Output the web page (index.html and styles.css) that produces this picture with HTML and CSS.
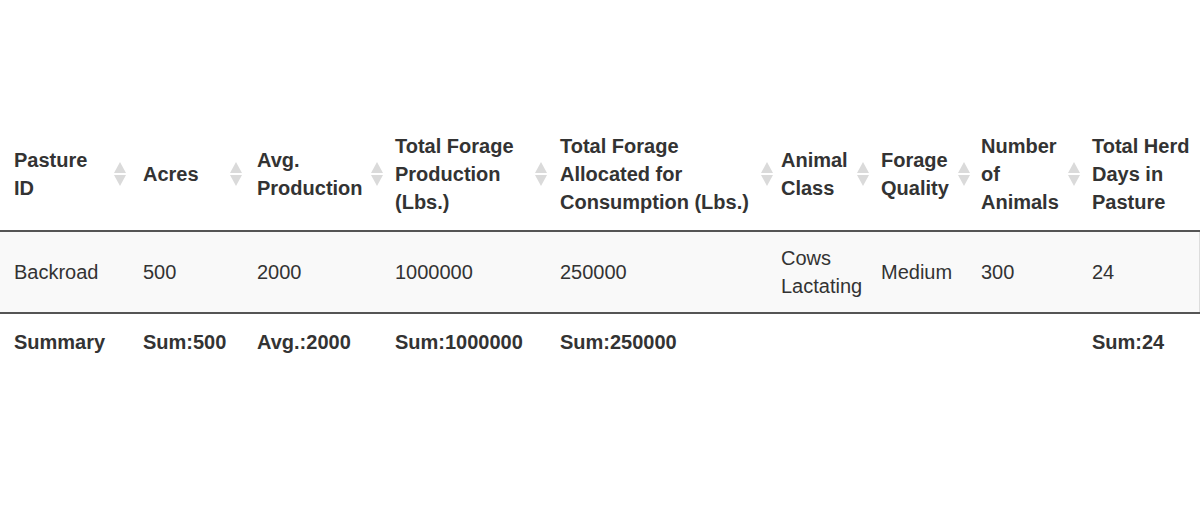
FILE: index.html
```html
<!DOCTYPE html>
<html lang="en">
<head>
<meta charset="utf-8">
<title>Pasture Summary</title>
<link rel="stylesheet" href="styles.css">
</head>
<body>
<table class="grid">
  <colgroup>
    <col class="c1"><col class="c2"><col class="c3"><col class="c4"><col class="c5"><col class="c6"><col class="c7"><col class="c8"><col class="c9">
  </colgroup>
  <thead>
    <tr>
      <th class="sortable s1">Pasture ID<svg class="sort" viewBox="0 0 12 24"><path d="M6 0 12 11H0Z"/><path d="M0 13H12L6 24Z"/></svg></th>
      <th class="sortable s2">Acres<svg class="sort" viewBox="0 0 12 24"><path d="M6 0 12 11H0Z"/><path d="M0 13H12L6 24Z"/></svg></th>
      <th class="sortable s3">Avg. Production<svg class="sort" viewBox="0 0 12 24"><path d="M6 0 12 11H0Z"/><path d="M0 13H12L6 24Z"/></svg></th>
      <th class="sortable s4">Total Forage Production (Lbs.)<svg class="sort" viewBox="0 0 12 24"><path d="M6 0 12 11H0Z"/><path d="M0 13H12L6 24Z"/></svg></th>
      <th class="sortable s5">Total Forage Allocated for Consumption (Lbs.)<svg class="sort" viewBox="0 0 12 24"><path d="M6 0 12 11H0Z"/><path d="M0 13H12L6 24Z"/></svg></th>
      <th class="sortable s6">Animal Class<svg class="sort" viewBox="0 0 12 24"><path d="M6 0 12 11H0Z"/><path d="M0 13H12L6 24Z"/></svg></th>
      <th class="sortable s7">Forage Quality<svg class="sort" viewBox="0 0 12 24"><path d="M6 0 12 11H0Z"/><path d="M0 13H12L6 24Z"/></svg></th>
      <th class="sortable s8">Number of Animals<svg class="sort" viewBox="0 0 12 24"><path d="M6 0 12 11H0Z"/><path d="M0 13H12L6 24Z"/></svg></th>
      <th class="last">Total Herd Days in Pasture</th>
    </tr>
  </thead>
  <tbody>
    <tr class="odd">
      <td>Backroad</td>
      <td>500</td>
      <td>2000</td>
      <td>1000000</td>
      <td>250000</td>
      <td>Cows Lactating</td>
      <td>Medium</td>
      <td>300</td>
      <td class="edge">24</td>
    </tr>
  </tbody>
  <tfoot>
    <tr>
      <th>Summary</th>
      <th>Sum:500</th>
      <th>Avg.:2000</th>
      <th>Sum:1000000</th>
      <th>Sum:250000</th>
      <th></th>
      <th></th>
      <th></th>
      <th>Sum:24</th>
    </tr>
  </tfoot>
</table>
</body>
</html>
```

FILE: styles.css
```css
html, body {
  margin: 0;
  padding: 0;
  background: #ffffff;
  overflow: hidden;
}

body {
  font-family: "Liberation Sans", Arial, Helvetica, sans-serif;
  font-size: 20px;
  line-height: 28px;
  color: #333333;
}

.grid {
  margin-top: 118px;
  width: 1200px;
  table-layout: fixed;
  border-collapse: separate;
  border-spacing: 0;
}

.c1 { width: 129px; }
.c2 { width: 114px; }
.c3 { width: 138px; }
.c4 { width: 165px; }
.c5 { width: 221px; }
.c6 { width: 100px; }
.c7 { width: 100px; }
.c8 { width: 111px; }
.c9 { width: 122px; }

.grid thead th {
  position: relative;
  text-align: left;
  font-weight: bold;
  vertical-align: middle;
  padding: 14px 18px 14px 14px;
  border-bottom: 2px solid #555555;
}

.grid thead th.s1 { padding-right: 24px; }
.grid thead th.last { padding-right: 4px; }

.sort {
  position: absolute;
  top: 50%;
  width: 12px;
  height: 24px;
  margin-top: -12px;
  fill: #dadada;
}

.s1 .sort { right: 3px; }
.s2 .sort { right: 1px; }
.s3 .sort { right: -2px; }
.s4 .sort { right: -1px; }
.s5 .sort { right: -6px; }
.s6 .sort { right: -2px; }
.s7 .sort { right: -3px; }
.s8 .sort { right: -2px; }

.grid tbody tr.odd td {
  background: #f9f9f9;
}

.grid tbody td {
  padding: 12px 4px 12px 14px;
  vertical-align: middle;
}

.grid tbody td.edge {
  box-shadow: inset -1px 0 0 #dddddd;
}

.grid tfoot th {
  text-align: left;
  font-weight: bold;
  padding: 14px 4px 14px 14px;
  border-top: 2px solid #555555;
  vertical-align: middle;
}
```
